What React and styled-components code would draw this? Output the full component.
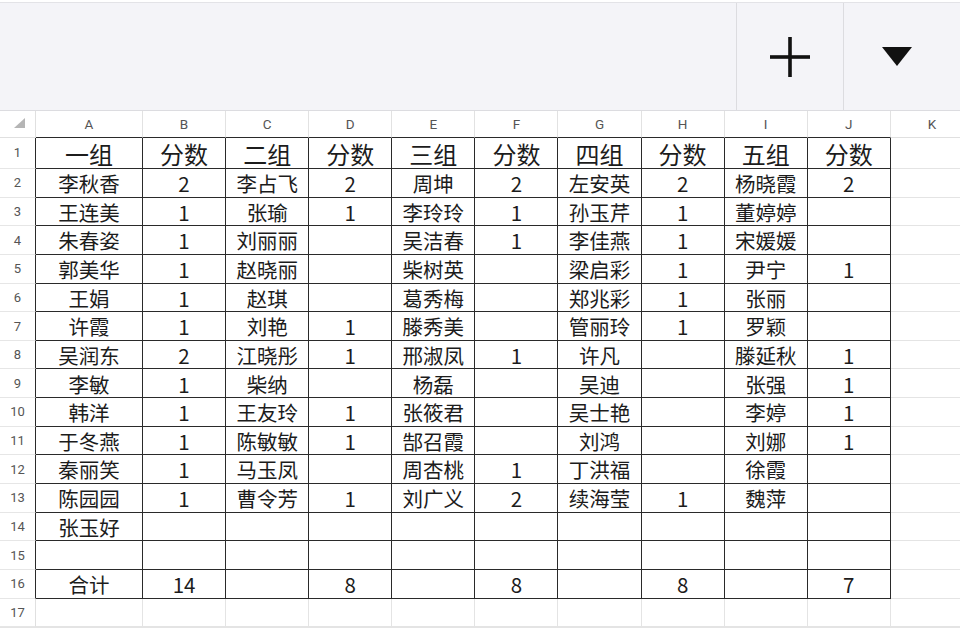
import styled, { createGlobalStyle } from "styled-components";

const GlobalStyle = createGlobalStyle`
  html, body {
    margin: 0;
    padding: 0;
    background: #ffffff;
    overflow: hidden;
  }
  body {
    font-family: "Noto Sans CJK SC", "Noto Sans", sans-serif;
  }
`;

const COLS = ["A", "B", "C", "D", "E", "F", "G", "H", "I", "J", "K"];

const DATA = [
  ["一组", "分数", "二组", "分数", "三组", "分数", "四组", "分数", "五组", "分数"],
  ["李秋香", "2", "李占飞", "2", "周坤", "2", "左安英", "2", "杨晓霞", "2"],
  ["王连美", "1", "张瑜", "1", "李玲玲", "1", "孙玉芹", "1", "董婷婷", ""],
  ["朱春姿", "1", "刘丽丽", "", "吴洁春", "1", "李佳燕", "1", "宋媛媛", ""],
  ["郭美华", "1", "赵晓丽", "", "柴树英", "", "梁启彩", "1", "尹宁", "1"],
  ["王娟", "1", "赵琪", "", "葛秀梅", "", "郑兆彩", "1", "张丽", ""],
  ["许霞", "1", "刘艳", "1", "滕秀美", "", "管丽玲", "1", "罗颖", ""],
  ["吴润东", "2", "江晓彤", "1", "邢淑凤", "1", "许凡", "", "滕延秋", "1"],
  ["李敏", "1", "柴纳", "", "杨磊", "", "吴迪", "", "张强", "1"],
  ["韩洋", "1", "王友玲", "1", "张筱君", "", "吴士艳", "", "李婷", "1"],
  ["于冬燕", "1", "陈敏敏", "1", "郜召霞", "", "刘鸿", "", "刘娜", "1"],
  ["秦丽笑", "1", "马玉凤", "", "周杏桃", "1", "丁洪福", "", "徐霞", ""],
  ["陈园园", "1", "曹令芳", "1", "刘广义", "2", "续海莹", "1", "魏萍", ""],
  ["张玉好", "", "", "", "", "", "", "", "", ""],
  ["", "", "", "", "", "", "", "", "", ""],
  ["合计", "14", "", "8", "", "8", "", "8", "", "7"],
];

const TOTAL_ROWS = 17;

const Page = styled.div`
  padding-top: 2px;
  width: 960px;
  height: 631px;
  overflow: hidden;
  box-sizing: border-box;
`;

const Toolbar = styled.div`
  display: flex;
  justify-content: flex-end;
  height: 109px;
  box-sizing: border-box;
  padding-right: 10px;
  background: #f4f4f8;
  border-top: 1px solid #e3e3e7;
  border-bottom: 1px solid #dcdce0;
`;

const ToolButton = styled.button`
  width: 107px;
  border: none;
  border-left: 1px solid #dcdce0;
  background: transparent;
  display: flex;
  align-items: center;
  justify-content: center;
  padding: 0;
  color: #111;
`;

const Sheet = styled.div`
  display: grid;
  grid-template-columns: 36px 107px repeat(10, 83.1px);
  grid-template-rows: 26.5px 31.5px repeat(${TOTAL_ROWS - 1}, 28.65px);
  width: 960px;
  overflow: hidden;
`;

const Corner = styled.div`
  box-sizing: border-box;
  border-right: 1px solid #e0e0e0;
  border-bottom: 1px solid #e0e0e0;
  display: flex;
  align-items: flex-end;
  justify-content: flex-end;
  padding: 0 10px 9px 0;
`;

const ColHead = styled.div`
  box-sizing: border-box;
  border-right: 1px solid #e2e2e2;
  border-bottom: 1px solid ${(p) => (p.$dark ? "#2a2a2a" : "#e0e0e0")};
  display: flex;
  align-items: center;
  justify-content: center;
  font-family: "Roboto", "Noto Sans", sans-serif;
  font-size: 13.5px;
  color: #555;
`;

const RowHead = styled.div`
  box-sizing: border-box;
  border-right: 1px solid ${(p) => (p.$dark ? "#2a2a2a" : "#e0e0e0")};
  border-bottom: 1px solid #e6e6e6;
  display: flex;
  align-items: center;
  justify-content: center;
  font-family: "Roboto", "Noto Sans", sans-serif;
  font-size: 13px;
  color: #555;
`;

const Cell = styled.div`
  box-sizing: border-box;
  border-right: 1px solid ${(p) => (p.$dark ? "#2a2a2a" : "#e4e4e4")};
  border-bottom: 1px solid ${(p) => (p.$dark ? "#2a2a2a" : "#e4e4e4")};
  display: flex;
  align-items: center;
  justify-content: center;
  padding-top: ${(p) => (p.$title ? "2px" : "1px")};
  font-family: "Noto Sans CJK SC", sans-serif;
  font-size: ${(p) => (p.$title ? "24px" : "20.5px")};
  color: #1c1c1c;
  white-space: nowrap;
  line-height: 1;
`;

const Tail = styled.div`
  border-top: 1px solid #e4e4e4;
  height: 4px;
`;

function PlusIcon() {
  return (
    <svg width="40" height="40" viewBox="0 0 40 40">
      <rect x="0" y="18.2" width="40" height="3.6" fill="#111" />
      <rect x="18.2" y="0" width="3.6" height="40" fill="#111" />
    </svg>
  );
}

function CaretIcon() {
  return (
    <svg width="30" height="19" viewBox="0 0 30 19">
      <polygon points="0,0 30,0 15,19" fill="#111" />
    </svg>
  );
}

function CornerMark() {
  return (
    <svg width="11" height="10" viewBox="0 0 11 10">
      <polygon points="11,0 11,10 0,10" fill="#b5b5b5" />
    </svg>
  );
}

export default function App() {
  const rows = [];
  for (let r = 0; r < TOTAL_ROWS; r++) {
    const inData = r < DATA.length;
    rows.push(
      <RowHead key={`rh${r}`} $dark={inData}>
        {r + 1}
      </RowHead>
    );
    COLS.forEach((c, ci) => {
      const dark = inData && ci < 10;
      const value = inData && ci < 10 ? DATA[r][ci] : "";
      rows.push(
        <Cell key={`${c}${r}`} $dark={dark} $title={r === 0}>
          {value}
        </Cell>
      );
    });
  }

  return (
    <Page>
      <GlobalStyle />
      <Toolbar>
        <ToolButton aria-label="add">
          <PlusIcon />
        </ToolButton>
        <ToolButton aria-label="more">
          <CaretIcon />
        </ToolButton>
      </Toolbar>
      <Sheet>
        <Corner>
          <CornerMark />
        </Corner>
        {COLS.map((c, i) => (
          <ColHead key={c} $dark={i < 10}>
            {c}
          </ColHead>
        ))}
        {rows}
      </Sheet>
      <Tail />
    </Page>
  );
}
